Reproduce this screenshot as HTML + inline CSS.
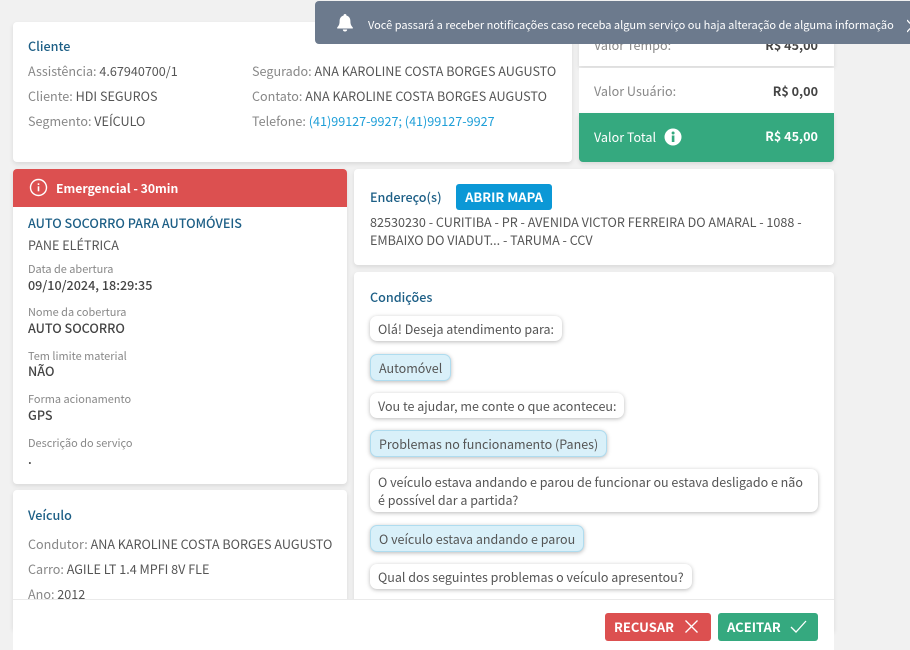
<!DOCTYPE html>
<html><head><meta charset="utf-8"><style>
html,body{margin:0;padding:0}
body{width:910px;height:650px;overflow:hidden;background:#f1f1f1;position:relative;font-family:"Noto Sans CJK JP","Liberation Sans",sans-serif;font-size:12.6px;color:#555}
.c{position:absolute;background:#fff;border-radius:4px;box-shadow:0 2px 5px rgba(0,0,0,.1)}
.t{position:absolute;white-space:nowrap;line-height:20px}
.h{color:#1d5f86;font-weight:500}
.l{color:#888}
.s{font-size:10.95px;color:#888}
.v{color:#444;font-weight:500}
.b{position:absolute;left:370px;box-sizing:border-box;background:#fff;border-radius:7px;box-shadow:0 1px 4px rgba(0,0,0,.28);line-height:18px;padding:0 8px;white-space:nowrap;color:#555;font-size:12.5px}
.a{background:#d9f0f9;border:1px solid #afdcef;padding:0 8px}
</style></head><body>
<div class="c" style="left:13px;top:22px;width:559px;height:140px"></div>
<div class="t h" style="left:28px;top:36px">Cliente</div>
<div class="t" style="left:28px;top:61px"><span class="l">Assistência:</span> 4.67940700/1</div>
<div class="t" style="left:28px;top:86px"><span class="l">Cliente:</span> HDI SEGUROS</div>
<div class="t" style="left:28px;top:111px"><span class="l">Segmento:</span> VEÍCULO</div>
<div class="t" style="left:252px;top:61px"><span class="l">Segurado:</span> ANA KAROLINE COSTA BORGES AUGUSTO</div>
<div class="t" style="left:252px;top:86px"><span class="l">Contato:</span> ANA KAROLINE COSTA BORGES AUGUSTO</div>
<div class="t" style="left:252px;top:111px"><span class="l">Telefone:</span> <span style="color:#1f9fd8">(41)99127-9927; (41)99127-9927</span></div>

<div class="c" style="left:579px;top:22px;width:255px;height:44px;border-radius:4px 4px 0 0"></div>
<div class="t l" style="left:594px;top:35px">Valor Tempo:</div>
<div class="t v" style="right:92px;top:35px;font-weight:700">R$ 45,00</div>
<div class="c" style="left:579px;top:68px;width:255px;height:50px;border-radius:0;box-shadow:none"></div>
<div class="t l" style="left:594px;top:81px">Valor Usuário:</div>
<div class="t v" style="right:92px;top:81px;font-weight:700">R$ 0,00</div>
<div class="c" style="left:579px;top:113px;width:255px;height:49px;background:#35a97f;border-radius:0 0 4px 4px"></div>
<div class="t" style="left:594px;top:127px;color:#fff">Valor Total</div>
<svg style="position:absolute;left:664px;top:128px" width="18" height="18" viewBox="0 0 18 18"><circle cx="9" cy="9" r="8.5" fill="#fff"/><rect x="7.8" y="7.5" width="2.6" height="6.5" fill="#35a97f"/><circle cx="9.1" cy="5" r="1.5" fill="#35a97f"/></svg>
<div class="t" style="right:92px;top:126px;color:#fff;font-weight:700">R$ 45,00</div>

<div style="position:absolute;left:315px;top:1px;width:600px;height:43px;background:#6c7a8d;border-radius:4px"></div>
<svg style="position:absolute;left:336px;top:13px" width="18" height="20" viewBox="0 0 18 20"><path d="M9 1a1.4 1.4 0 0 1 1.4 1.5C13 3.2 14.4 5.3 14.4 8c0 3.5 1 5 2.4 6.4v1.1H1.2v-1.1C2.600 13 3.600 11.500 3.600 8c0-2.700 1.400-4.800 4-5.500A1.400 1.400 0 0 1 9 1zM6.800 16.500h4.400A2.200 2.200 0 0 1 9 18.500a2.200 2.200 0 0 1-2.200-2z" fill="#fff"/></svg>
<div class="t" style="left:368px;top:15px;color:#fff;font-size:11px">Você passará a receber notificações caso receba algum serviço ou haja alteração de alguma informação</div>
<svg style="position:absolute;left:907px;top:19px" width="3" height="14" viewBox="0 0 3 14"><path d="M0 1L3 4.500M0 13L3 9.500" stroke="#fff" stroke-width="1.300" fill="none"/></svg>

<div class="c" style="left:13px;top:169px;width:334px;height:315px"></div>
<div style="position:absolute;left:13px;top:169px;width:334px;height:38px;background:#dc5050;border-radius:4px 4px 0 0"></div>
<svg style="position:absolute;left:29px;top:178px" width="19" height="19" viewBox="0 0 19 19"><circle cx="9.500" cy="9.500" r="8" fill="none" stroke="#fff" stroke-width="1.400"/><rect x="8.700" y="8.300" width="1.600" height="5" fill="#fff"/><rect x="8.700" y="5.300" width="1.600" height="1.700" fill="#fff"/></svg>
<div class="t" style="left:56px;top:178px;color:#fff;font-weight:700;font-size:12.2px">Emergencial - 30min</div>
<div class="t h" style="left:28px;top:213px">AUTO SOCORRO PARA AUTOMÓVEIS</div>
<div class="t" style="left:28px;top:235px">PANE ELÉTRICA</div>
<div class="t s" style="left:28px;top:259px">Data de abertura</div>
<div class="t v" style="left:28px;top:275px">09/10/2024, 18:29:35</div>
<div class="t s" style="left:28px;top:302px">Nome da cobertura</div>
<div class="t v" style="left:28px;top:318px">AUTO SOCORRO</div>
<div class="t s" style="left:28px;top:346px">Tem limite material</div>
<div class="t v" style="left:28px;top:361px">NÃO</div>
<div class="t s" style="left:28px;top:389px">Forma acionamento</div>
<div class="t v" style="left:28px;top:405px">GPS</div>
<div class="t s" style="left:28px;top:433px">Descrição do serviço</div>
<div class="t v" style="left:28px;top:449px">.</div>

<div class="c" style="left:13px;top:490px;width:334px;height:140px"></div>
<div class="t h" style="left:28px;top:505px">Veículo</div>
<div class="t" style="left:28px;top:534px"><span class="l">Condutor:</span> ANA KAROLINE COSTA BORGES AUGUSTO</div>
<div class="t" style="left:28px;top:559px"><span class="l">Carro:</span> AGILE LT 1.4 MPFI 8V FLE</div>
<div class="t" style="left:28px;top:584px"><span class="l">Ano:</span> 2012</div>

<div class="c" style="left:354px;top:169px;width:480px;height:96px"></div>
<div class="t h" style="left:370px;top:187px">Endereço(s)</div>
<div style="position:absolute;left:456px;top:184px;width:96px;height:26px;background:#0b98d6;border-radius:3px;color:#fff;font-weight:700;text-align:center;line-height:26px;font-size:13px">ABRIR MAPA</div>
<div class="t" style="left:370px;top:213px;line-height:18px;white-space:normal;width:450px;">82530230 - CURITIBA - PR - AVENIDA VICTOR FERREIRA DO AMARAL - 1088 - EMBAIXO DO VIADUT... - TARUMA - CCV</div>

<div class="c" style="left:354px;top:272px;width:480px;height:360px"></div>
<div class="t h" style="left:370px;top:287px">Condições</div>
<div class="b" style="top:316px;height:25px;line-height:25px">Olá! Deseja atendimento para:</div>
<div class="b a" style="top:354px;height:27px;line-height:25px">Automóvel</div>
<div class="b" style="top:393px;height:25px;line-height:25px">Vou te ajudar, me conte o que aconteceu:</div>
<div class="b a" style="top:430px;height:27px;line-height:25px">Problemas no funcionamento (Panes)</div>
<div class="b" style="top:469px;width:448px;height:43px;padding:4px 8px;white-space:normal">O veículo estava andando e parou de funcionar ou estava desligado e não é possível dar a partida?</div>
<div class="b a" style="top:525px;height:27px;line-height:25px">O veículo estava andando e parou</div>
<div class="b" style="top:564px;height:25px;line-height:25px">Qual dos seguintes problemas o veículo apresentou?</div>

<div style="position:absolute;left:13px;top:599px;width:821px;height:51px;background:#fff;border-top:1px solid #eaeaea;box-sizing:border-box"></div>
<div style="position:absolute;left:605px;top:613px;width:106px;height:28px;background:#dc5050;border-radius:3px"></div>
<div class="t" style="left:614px;top:617px;color:#fff;font-weight:700;font-size:13px">RECUSAR</div>
<svg style="position:absolute;left:684px;top:619px" width="15" height="15" viewBox="0 0 15 15"><path d="M1.500 1.500L13.500 13.500M13.500 1.500L1.500 13.500" stroke="#fff" stroke-width="1.300" fill="none"/></svg>
<div style="position:absolute;left:718px;top:613px;width:100px;height:28px;background:#35a97f;border-radius:3px"></div>
<div class="t" style="left:727px;top:617px;color:#fff;font-weight:700;font-size:13px">ACEITAR</div>
<svg style="position:absolute;left:790px;top:619px" width="17" height="15" viewBox="0 0 17 15"><path d="M1 8L6 13L16 2" stroke="#fff" stroke-width="1.300" fill="none"/></svg>
</body></html>
